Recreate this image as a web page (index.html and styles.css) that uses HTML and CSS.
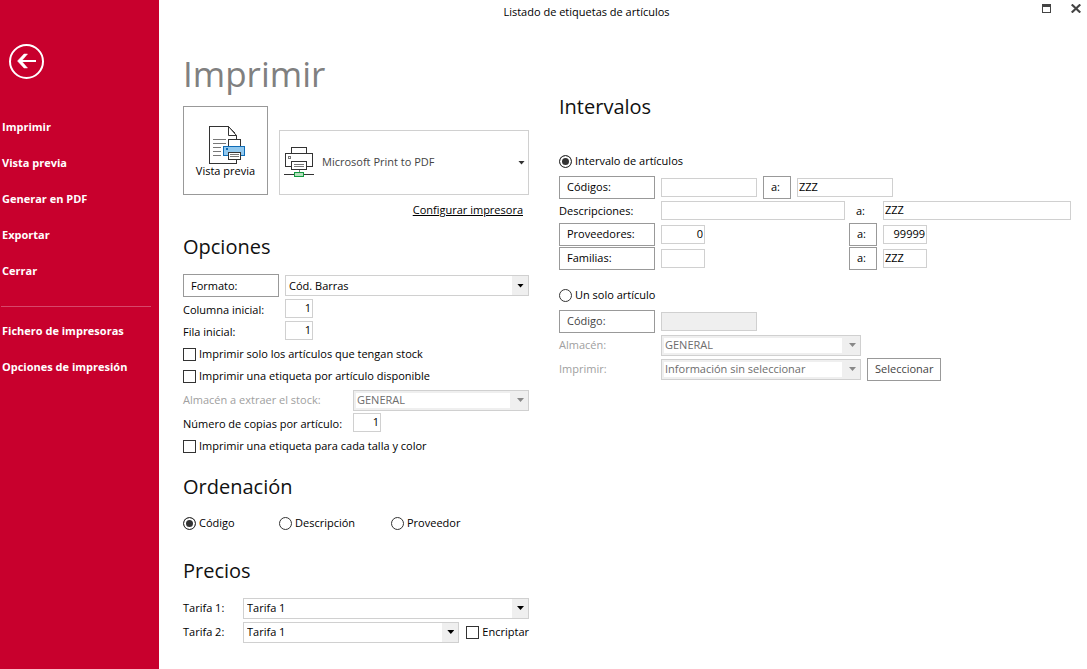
FILE: index.html
```html
<!DOCTYPE html>
<html lang="es">
<head>
<meta charset="utf-8">
<title>Listado de etiquetas de artículos</title>
<link rel="stylesheet" href="styles.css">
</head>
<body>
<div class="window">
  <nav class="sidebar">
    <button class="back" type="button" aria-label="Volver">
      <svg width="36" height="36" viewBox="0 0 36 36" fill="none" stroke="#fff">
        <circle cx="17.500" cy="17.500" r="16.500" stroke-width="2"/>
        <path d="M11 17H27" stroke-width="2"/>
        <path d="M18.500 10H15L8.500 17L15 24H18.500L12.500 17Z" fill="#fff" stroke-width="0.500"/>
      </svg>
    </button>
    <a class="nav-item" href="#">Imprimir</a>
    <a class="nav-item" href="#">Vista previa</a>
    <a class="nav-item" href="#">Generar en PDF</a>
    <a class="nav-item" href="#">Exportar</a>
    <a class="nav-item" href="#">Cerrar</a>
    <hr class="nav-rule">
    <a class="nav-item" href="#">Fichero de impresoras</a>
    <a class="nav-item" href="#">Opciones de impresión</a>
  </nav>
  <div class="main">
    <header class="titlebar">
      <span class="title">Listado de etiquetas de artículos</span>
      <div class="window-controls">
        <button class="control" type="button" aria-label="Maximizar">
          <svg width="9" height="9" viewBox="0 0 9 9" shape-rendering="crispEdges"><path d="M0 0H9V9H0ZM1 3V8H8V3Z" fill="#444" fill-rule="evenodd"/></svg>
        </button>
        <button class="control" type="button" aria-label="Cerrar ventana">
          <svg width="10" height="9" viewBox="0 0 10 9"><path d="M0.700 0.500L9.300 8.500M9.300 0.500L0.700 8.500" stroke="#444" stroke-width="2.200"/></svg>
        </button>
      </div>
    </header>
    <main class="content">
      <section class="column">
        <h1 class="page-title">Imprimir</h1>
        <div class="print-row">
          <button class="preview" type="button">
            <svg width="37" height="39" viewBox="0 0 37 39" fill="none" shape-rendering="crispEdges">
              <path d="M0.500 0.500H19.500L27.500 9.500V37.500H0.500Z" fill="#fff" stroke="#333"/>
              <path d="M19.500 0.500V9.500H27.500Z" fill="#fff" stroke="#333" shape-rendering="auto"/>
              <path d="M4 13.500H17M4 17.500H17M4 21.500H12M4 25.500H12M4 29.500H12" stroke="#777"/>
              <path d="M19.500 20.500V13.500H31.500V20.500" fill="#fff" stroke="#333"/>
              <path d="M14.500 20.500H35.500V29.500H14.500Z" fill="#91c8ee" stroke="#0f6cb6"/>
              <path d="M17 23H19" stroke="#0f6cb6" stroke-width="2"/>
              <path d="M19.500 26.500H31.500V33.500H19.500Z" fill="#fff" stroke="#333"/>
              <path d="M21 28.500H30M21 30.500H30" stroke="#777"/>
            </svg>
            <span>Vista previa</span>
          </button>
          <div class="printer">
            <svg class="printer-icon" width="30" height="31" viewBox="0 0 30 31" fill="none" shape-rendering="crispEdges">
              <path d="M7.500 6.500V0.500H22.500V6.500" fill="#fff" stroke="#333"/>
              <path d="M1.500 6.500H28.500V19.500H1.500Z" fill="#fff" stroke="#333"/>
              <path d="M4.500 9.500H6.500V11.500H4.500Z" stroke="#777"/>
              <path d="M7.500 14.500H22.500V22.500H7.500Z" fill="#fff" stroke="#333"/>
              <path d="M10 17.500H20M10 19.500H20M15.500 23V25" stroke="#777"/>
              <path d="M0 27.500H30" stroke="#333"/>
              <path d="M10.500 25.500H19.500V29.500H10.500Z" fill="#b5dfbd" stroke="#129b3f"/>
            </svg>
            <select class="printer-select" aria-label="Impresora"><option>Microsoft Print to PDF</option></select>
          </div>
        </div>
        <a class="config" href="#">Configurar impresora</a>

        <h2 class="heading">Opciones</h2>
        <div class="row row-first">
          <button class="button name" type="button">Formato:</button>
          <div class="select grow"><select aria-label="Formato"><option>Cód. Barras</option></select></div>
        </div>
        <div class="row">
          <label class="name" for="columna">Columna inicial:</label>
          <input class="field tiny number" id="columna" type="text" value="1">
        </div>
        <div class="row">
          <label class="name" for="fila">Fila inicial:</label>
          <input class="field tiny number" id="fila" type="text" value="1">
        </div>
        <label class="row choice"><input type="checkbox">Imprimir solo los artículos que tengan stock</label>
        <label class="row choice"><input type="checkbox">Imprimir una etiqueta por artículo disponible</label>
        <div class="row row-tall">
          <label class="long-name muted" for="stock">Almacén a extraer el stock:</label>
          <div class="select grow off"><select id="stock" disabled><option>GENERAL</option></select></div>
        </div>
        <div class="row">
          <label class="long-name" for="copias">Número de copias por artículo:</label>
          <input class="field tiny number" id="copias" type="text" value="1">
        </div>
        <label class="row choice"><input type="checkbox">Imprimir una etiqueta para cada talla y color</label>

        <h2 class="heading">Ordenación</h2>
        <div class="orders">
          <label class="choice"><input type="radio" name="orden" checked>Código</label>
          <label class="choice wide"><input type="radio" name="orden">Descripción</label>
          <label class="choice"><input type="radio" name="orden">Proveedor</label>
        </div>

        <h2 class="heading">Precios</h2>
        <div class="row price">
          <label class="short-name" for="tarifa1">Tarifa 1:</label>
          <div class="select grow"><select id="tarifa1"><option>Tarifa 1</option></select></div>
        </div>
        <div class="row price">
          <label class="short-name" for="tarifa2">Tarifa 2:</label>
          <div class="select grow"><select id="tarifa2"><option>Tarifa 1</option></select></div>
          <label class="choice encrypt"><input type="checkbox">Encriptar</label>
        </div>
      </section>

      <section class="column ranges">
        <h2 class="heading">Intervalos</h2>
        <label class="choice mode"><input type="radio" name="modo" checked>Intervalo de artículos</label>
        <div class="row line">
          <button class="button name" type="button">Códigos:</button>
          <input class="field code" type="text" aria-label="Código desde">
          <button class="button to" type="button">a:</button>
          <input class="field code" type="text" aria-label="Código hasta" value="ZZZ">
        </div>
        <div class="grid">
          <label for="desc">Descripciones:</label>
          <input class="field fill" id="desc" type="text">
          <label class="to" for="desc-a">a:</label>
          <input class="field" id="desc-a" type="text" value="ZZZ">

          <button class="button name" type="button">Proveedores:</button>
          <input class="field small number" type="text" aria-label="Proveedor desde" value="0">
          <button class="button to" type="button">a:</button>
          <input class="field small number" type="text" aria-label="Proveedor hasta" value="99999">

          <button class="button name" type="button">Familias:</button>
          <input class="field small" type="text" aria-label="Familia desde">
          <button class="button to" type="button">a:</button>
          <input class="field small" type="text" aria-label="Familia hasta" value="ZZZ">
        </div>

        <label class="choice mode single"><input type="radio" name="modo">Un solo artículo</label>
        <div class="row line">
          <button class="button name dim" type="button">Código:</button>
          <input class="field code" type="text" aria-label="Código" disabled>
        </div>
        <div class="row line">
          <label class="name muted" for="almacen">Almacén:</label>
          <div class="select store off"><select id="almacen" disabled><option>GENERAL</option></select></div>
        </div>
        <div class="row line">
          <label class="name muted" for="info">Imprimir:</label>
          <div class="select store off"><select id="info" disabled><option>Información sin seleccionar</option></select></div>
          <button class="button dim" type="button">Seleccionar</button>
        </div>
      </section>
    </main>
  </div>
</div>
</body>
</html>
```
FILE: styles.css
```css
* { box-sizing: border-box; }

body {
  margin: 0;
  background: #fff;
  color: #000;
  font: 11px/16px "Open Sans", "Noto Sans", sans-serif;
}

button, input, select {
  margin: 0;
  color: inherit;
  font: inherit;
}

button { cursor: pointer; }

.window { display: flex; min-height: 100vh; }

/* Sidebar */
.sidebar {
  display: flex;
  flex-direction: column;
  flex: none;
  width: 159px;
  padding-top: 44px;
  background: #c8002d;
}

.back {
  width: 36px;
  height: 36px;
  margin: 0 0 29px 9px;
  padding: 0;
  border: 0;
  background: none;
}

.back svg { display: block; }

.nav-item {
  padding-left: 2px;
  color: #fff;
  font-weight: 700;
  line-height: 36px;
  text-decoration: none;
}

.nav-rule {
  width: 150px;
  height: 1px;
  margin: 17px 0 6px 1px;
  border: 0;
  background: #d7476a;
}

/* Title bar */
.main { flex: 1; min-width: 0; }

.titlebar { display: flex; height: 24px; }

.title {
  flex: 1;
  line-height: 24px;
  text-align: center;
}

.window-controls {
  display: flex;
  align-items: flex-start;
  gap: 20px;
  width: 73px;
  padding: 4px 0 0 28px;
}

.control { padding: 0; border: 0; background: none; }
.control svg { display: block; }

/* Content */
.content {
  display: flex;
  gap: 30px;
  padding: 0 16px 16px 24px;
}

.column { flex: none; width: 346px; }
.ranges { flex: 1; width: auto; padding-top: 67px; }

.page-title {
  margin: 22px 0 4px;
  color: #808080;
  font-size: 35px;
  font-weight: 400;
  line-height: 56px;
}

.print-row { display: flex; align-items: flex-end; gap: 11px; }

.preview {
  display: flex;
  flex-direction: column;
  align-items: center;
  width: 85px;
  height: 89px;
  padding: 19px 0 0;
  border: 1px solid #999;
  background: #fff;
}

.preview svg { margin: 0 0 -2px 4px; }

.printer { position: relative; flex: 1; height: 65px; }
.printer-icon { position: absolute; top: 17px; left: 5px; pointer-events: none; }

.printer-select {
  width: 100%;
  height: 100%;
  padding: 0 20px 2px 42px;
  border: 1px solid #d0d0d0;
  border-radius: 0;
  background: #fff;
  color: #444;
  appearance: none;
}

.printer::after, .select::after {
  content: "";
  position: absolute;
  top: 50%;
  right: 5px;
  width: 7px;
  height: 4px;
  margin-top: -2px;
  background: #000;
  clip-path: polygon(0 0, 100% 0, 50% 100%);
  pointer-events: none;
}

.printer::after { right: 4px; background: #333; }

.config {
  display: block;
  width: max-content;
  margin: 7px 6px 0 auto;
  color: #000;
}

.heading {
  margin: 0;
  color: #111;
  font-size: 20px;
  font-weight: 400;
  line-height: 28px;
}

.config + .heading { margin: 15px 0 13px; }
.row + .heading { margin: 16px 0 14px; }
.orders + .heading { margin: 26px 0 11px; }

/* Form rows */
.row { display: flex; align-items: center; gap: 6px; height: 22px; }
.row-first { height: 25px; padding-bottom: 2px; }
.row-tall { height: 26px; }
.price, .line { height: 24px; }

.name { flex: none; width: 96px; }
.long-name { flex: none; width: 164px; }
.short-name { flex: none; width: 54px; }
.grow { flex: 1; }
.muted { color: #a0a0a0; }

.button {
  height: 23px;
  padding: 0 7px;
  border: 1px solid #999;
  background: #fff;
  text-align: left;
  white-space: nowrap;
}

.dim { color: #444; }

.field {
  width: 100%;
  height: 19px;
  padding: 0 3px 2px 1px;
  border: 1px solid #d0d0d0;
  background: #fff;
  border-radius: 0;
}

.field:disabled { background: #efefef; }
.tiny { align-self: flex-start; width: 28px; }
.small { width: 44px; }
.code { width: 96px; }
.number { padding: 0 1px 2px; text-align: right; }

.select { position: relative; height: 21px; }
.store { width: 200px; }

.select select {
  display: block;
  width: 100%;
  height: 21px;
  padding: 0 18px 0 3px;
  border: 1px solid #d0d0d0;
  border-radius: 0;
  background: linear-gradient(#efefef, #efefef) right / 16px 100% no-repeat #fff;
  appearance: none;
}

.off select {
  background: linear-gradient(#fff, #fff) 2px 2px / calc(100% - 20px) calc(100% - 4px) no-repeat #efefef;
  color: #6d6d6d;
  opacity: 1;
}

.off::after { background: #888; }

/* Check boxes and radio buttons */
.choice { display: flex; align-items: center; gap: 3px; white-space: nowrap; }

.choice input {
  flex: none;
  width: 13px;
  height: 13px;
  border: 1px solid #333;
  background: #fff;
  appearance: none;
}

.choice input[type="radio"] { border-radius: 50%; }

.choice input:checked {
  background: #333;
  box-shadow: inset 0 0 0 2px #fff;
}

.orders {
  display: grid;
  grid-template-columns: 96px 112px 1fr;
  height: 16px;
}

.encrypt { margin-left: 1px; }

/* Ranges */
.ranges .heading { margin: 2px 0 31px; line-height: 28px; }
.mode { height: 18px; margin-bottom: 5px; }
.single { margin-top: 16px; }

.grid {
  display: grid;
  grid-template-columns: 102px 1fr 34px 1fr;
  grid-template-rows: 23px 24px 24px;
  align-items: center;
}

.to { width: 28px; }
label.to { padding-left: 7px; }
.fill { width: calc(100% - 4px); }
```
